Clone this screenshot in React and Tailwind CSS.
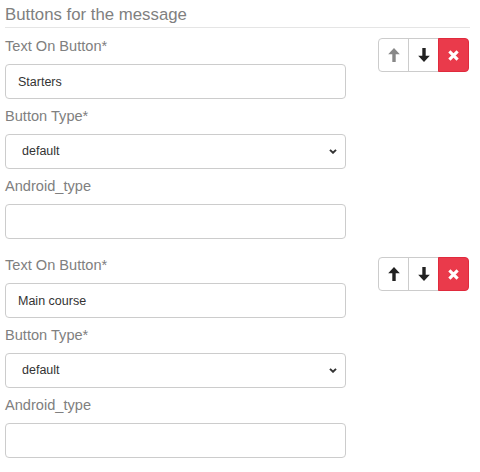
import React from "react";

const ArrowUp = ({ className }) => (
  <svg viewBox="0 0 12 14" className={className} fill="currentColor">
    <path d="M6 0 L11.8 6.2 L7.7 6.2 L7.7 14 L4.3 14 L4.3 6.2 L0.2 6.2 Z" />
  </svg>
);

const ArrowDown = ({ className }) => (
  <svg viewBox="0 0 12 14" className={className} fill="currentColor">
    <path d="M6 14 L11.8 7.8 L7.7 7.8 L7.7 0 L4.3 0 L4.3 7.8 L0.2 7.8 Z" />
  </svg>
);

const Cross = ({ className }) => (
  <svg viewBox="0 0 12 12" className={className} fill="none" stroke="currentColor" strokeWidth="3.4" strokeLinecap="butt">
    <path d="M1.5 1.5 L10.5 10.5 M10.5 1.5 L1.5 10.5" />
  </svg>
);

const Chevron = ({ className }) => (
  <svg viewBox="0 0 10 6" className={className} fill="none" stroke="currentColor" strokeWidth="2.4">
    <path d="M1.2 1 L5 4.6 L8.8 1" />
  </svg>
);

const Label = ({ children }) => (
  <div className="text-[14.6px] leading-5 text-[#808080] mb-2">{children}</div>
);

const ButtonRow = ({ text, upDisabled }) => (
  <div className="flex items-start mb-4">
    <div className="w-[341px]">
      <Label>Text On Button*</Label>
      <input
        readOnly
        value={text}
        className="block w-full h-[35px] rounded border border-[#ccc] px-3 text-[12.5px] text-[#333] bg-white outline-none mb-[7px]"
      />
      <Label>Button Type*</Label>
      <div className="relative mb-[7px]">
        <select className="block w-full h-[35px] rounded border border-[#ccc] pl-[16px] text-[12.5px] text-[#333] bg-white appearance-none outline-none">
          <option>default</option>
        </select>
        <Chevron className="absolute right-[9px] top-[15px] w-[8px] h-[5px] text-[#333] pointer-events-none" />
      </div>
      <Label>Android_type</Label>
      <input
        readOnly
        value=""
        className="block w-full h-[35px] rounded border border-[#ccc] px-3 text-[12.5px] text-[#333] bg-white outline-none"
      />
    </div>
    <div className="ml-[32px] mt-[2px] flex">
      <button className="w-[31px] h-[34px] flex items-center justify-center border border-[#ccc] rounded-l bg-white">
        <ArrowUp className={`w-[12px] h-[14px] ${upDisabled ? "text-[#888]" : "text-[#222]"}`} />
      </button>
      <button className="w-[31px] h-[34px] -ml-px flex items-center justify-center border border-[#ccc] bg-white">
        <ArrowDown className="w-[12px] h-[14px] text-[#222]" />
      </button>
      <button className="w-[31px] h-[34px] -ml-px flex items-center justify-center border border-[#e02a3d] rounded-r bg-[#ea3a4b]">
        <Cross className="w-[11px] h-[11px] text-white" />
      </button>
    </div>
  </div>
);

export default function App() {
  return (
    <div className="w-[480px] h-[472px] bg-white pl-[5px] pr-[10px] font-['Liberation_Sans',Arial,sans-serif] overflow-hidden">
      <div className="text-[16.8px] leading-6 text-[#808080] pt-[3px] border-b border-[#e5e5e5] mb-2">
        Buttons for the message
      </div>
      <ButtonRow text="Starters" upDisabled />
      <ButtonRow text="Main course" />
    </div>
  );
}
